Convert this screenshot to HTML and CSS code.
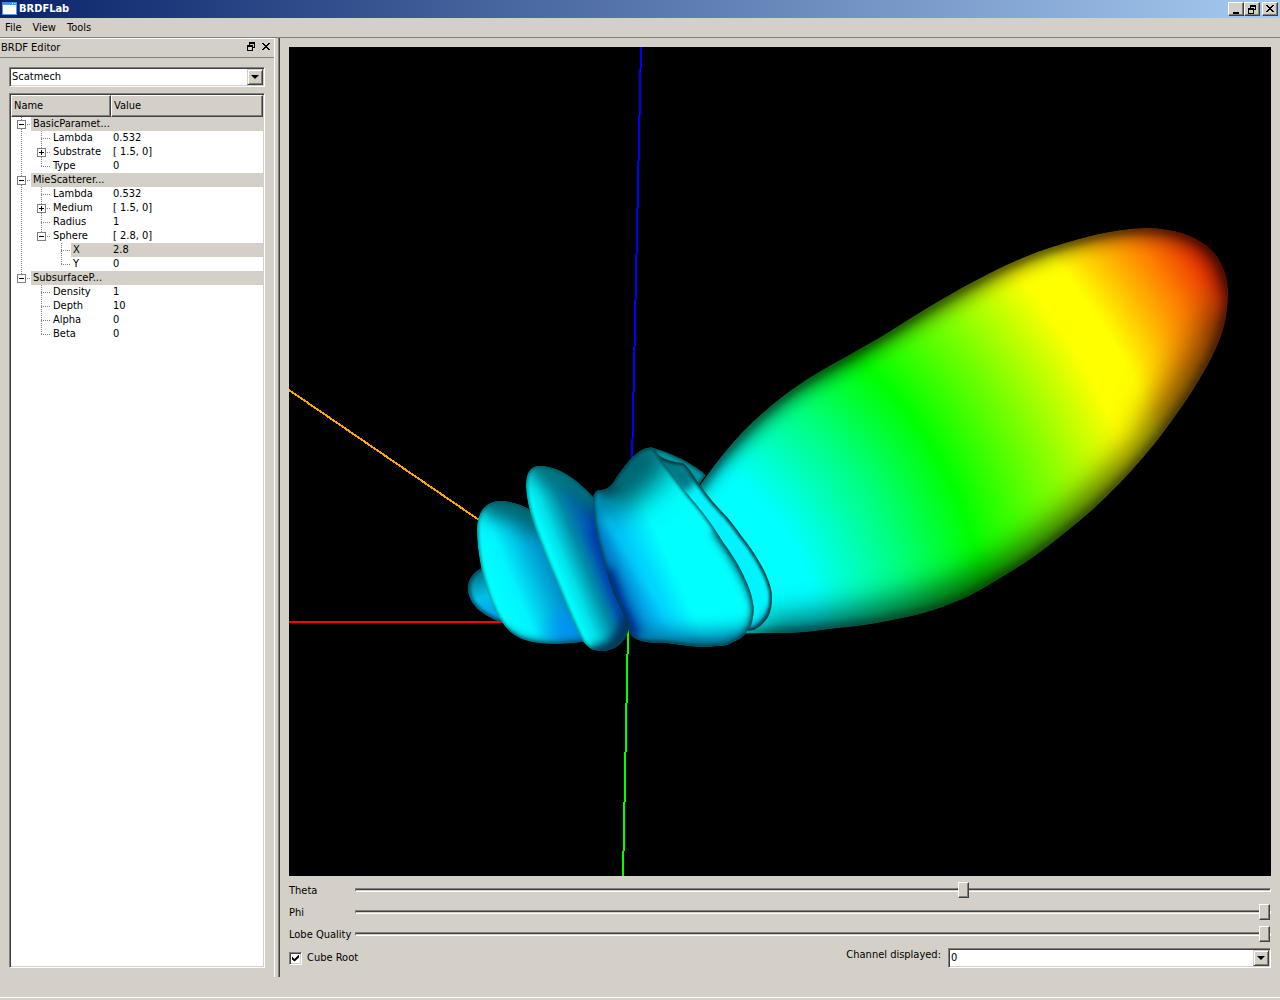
FILE: index.html
```html
<!DOCTYPE html>
<html lang="en">
<head>
<meta charset="utf-8">
<title>BRDFLab</title>
<link rel="stylesheet" href="styles.css">
</head>
<body>
<div class="window">
  <header class="titlebar">
    <svg class="app-icon" width="16" height="14" viewBox="0 0 16 14" aria-hidden="true">
      <rect x="0" y="0" width="15" height="13" fill="#5a9be0"/><rect x="0" y="0" width="15" height="2" fill="#3c8ce8"/><rect x="10" y="1" width="1" height="1" fill="#fff"/><rect x="12" y="1" width="2" height="1" fill="#f0a080"/><rect x="1" y="3" width="13" height="9" fill="#fffffa"/>
    </svg>
    <h1 class="title">BRDFLab</h1>
    <button class="win-btn" aria-label="Minimize"><svg width="12" height="10" viewBox="0 0 12 10"><path d="M3 8h6v2H3z"/></svg></button>
    <button class="win-btn" aria-label="Restore"><svg width="12" height="10" viewBox="0 0 12 10"><path fill-rule="evenodd" d="M4 1h6v5H8v4H2V4h2zM5 3v1h3v1h1V3zM3 6v3h4V6z"/></svg></button>
    <button class="win-btn win-close" aria-label="Close"><svg width="12" height="10" viewBox="0 0 12 10"><path d="M2 1h2v1h1v1h2V2h1V1h2v1H9v1H8v1H7v1h1v1h1v1h1v1H8V7H7V6H5v1H4v1H2V7h1V6h1V5h1V4H4V3H3V2H2z"/></svg></button>
  </header>

  <nav class="menubar" aria-label="Main menu">
    <button>File</button><button>View</button><button>Tools</button>
  </nav>

  <main class="workspace">
    <aside class="dock">
      <div class="dock-title">
        <h2>BRDF Editor</h2>
        <button aria-label="Float"><svg width="9" height="9" viewBox="0 0 9 9"><path fill-rule="evenodd" d="M2 0h6v6H6v3H0V3h2zM3 2v1h3v2h1V2zM1 5v3h4V5z"/></svg></button>
        <button aria-label="Close panel"><svg width="9" height="9" viewBox="0 0 9 9"><path d="M0 1h2v1h1v1h2V2h1V1h2v1H7v1H6v1H5v1h1v1h1v1h1v1H6V7H5V6H3v1H2v1H0V7h1V6h1V5h1V4H2V3H1V2H0z"/></svg></button>
      </div>
      <div class="dock-body">
        <div class="combo">
          <select aria-label="BRDF model"><option>Scatmech</option></select>
          <span class="combo-arrow"></span>
        </div>
        <div class="tree">
          <table>
            <thead><tr><th class="col-name" scope="col">Name</th><th scope="col">Value</th></tr></thead>
            <tbody>
              <tr class="shaded"><td><div class="cell"><i class="br mid"><button class="exp" aria-label="Collapse"></button></i><span>BasicParamet...</span></div></td><td></td></tr>
              <tr><td><div class="cell"><i class="br line"></i><i class="br mid"></i><span>Lambda</span></div></td><td>0.532</td></tr>
              <tr><td><div class="cell"><i class="br line"></i><i class="br mid"><button class="exp plus" aria-label="Expand"></button></i><span>Substrate</span></div></td><td>[ 1.5, 0]</td></tr>
              <tr><td><div class="cell"><i class="br line"></i><i class="br end"></i><span>Type</span></div></td><td>0</td></tr>
              <tr class="shaded"><td><div class="cell"><i class="br mid"><button class="exp" aria-label="Collapse"></button></i><span>MieScatterer...</span></div></td><td></td></tr>
              <tr><td><div class="cell"><i class="br line"></i><i class="br mid"></i><span>Lambda</span></div></td><td>0.532</td></tr>
              <tr><td><div class="cell"><i class="br line"></i><i class="br mid"><button class="exp plus" aria-label="Expand"></button></i><span>Medium</span></div></td><td>[ 1.5, 0]</td></tr>
              <tr><td><div class="cell"><i class="br line"></i><i class="br mid"></i><span>Radius</span></div></td><td>1</td></tr>
              <tr><td><div class="cell"><i class="br line"></i><i class="br end"><button class="exp" aria-label="Collapse"></button></i><span>Sphere</span></div></td><td>[ 2.8, 0]</td></tr>
              <tr class="shaded"><td><div class="cell"><i class="br line"></i><i class="br"></i><i class="br mid"></i><span>X</span></div></td><td>2.8</td></tr>
              <tr><td><div class="cell"><i class="br line"></i><i class="br"></i><i class="br end"></i><span>Y</span></div></td><td>0</td></tr>
              <tr class="shaded"><td><div class="cell"><i class="br end"><button class="exp" aria-label="Collapse"></button></i><span>SubsurfaceP...</span></div></td><td></td></tr>
              <tr><td><div class="cell"><i class="br"></i><i class="br mid"></i><span>Density</span></div></td><td>1</td></tr>
              <tr><td><div class="cell"><i class="br"></i><i class="br mid"></i><span>Depth</span></div></td><td>10</td></tr>
              <tr><td><div class="cell"><i class="br"></i><i class="br mid"></i><span>Alpha</span></div></td><td>0</td></tr>
              <tr><td><div class="cell"><i class="br"></i><i class="br end"></i><span>Beta</span></div></td><td>0</td></tr>
            </tbody>
          </table>
        </div>
      </div>
    </aside>
    <div class="splitter"></div>

    <section class="view">
      <svg class="scene" viewBox="289 47 982 829" preserveAspectRatio="xMidYMid slice" role="img" aria-label="Scattering lobe">
        <defs>
          <radialGradient id="hue" gradientUnits="userSpaceOnUse" cx="628" cy="632" r="720">
            <stop offset="0" stop-color="#0af"/>
            <stop offset=".17" stop-color="#0ff"/>
            <stop offset=".26" stop-color="#0ff"/>
            <stop offset=".385" stop-color="#00ff80"/>
            <stop offset=".495" stop-color="#0f0"/>
            <stop offset=".62" stop-color="#80ff00"/>
            <stop offset=".735" stop-color="#ff0"/>
            <stop offset=".785" stop-color="#ff0"/>
            <stop offset=".89" stop-color="#ff8000"/>
            <stop offset=".95" stop-color="#e83000"/>
            <stop offset="1" stop-color="#a00000"/>
          </radialGradient>
          <linearGradient id="gC" gradientUnits="userSpaceOnUse" x1="488" y1="580" x2="556" y2="552">
            <stop offset="0" stop-color="#0ff"/><stop offset=".3" stop-color="#00f4ff"/><stop offset=".7" stop-color="#00a8d8"/><stop offset="1" stop-color="#0078b8"/>
          </linearGradient>
          <linearGradient id="gB" gradientUnits="userSpaceOnUse" x1="544" y1="566" x2="606" y2="541">
            <stop offset="0" stop-color="#00e8e8"/><stop offset=".15" stop-color="#0ff"/><stop offset=".32" stop-color="#00e0e8"/><stop offset=".58" stop-color="#008ba8"/><stop offset=".82" stop-color="#0058b8"/><stop offset="1" stop-color="#0030a0"/>
          </linearGradient>
          <linearGradient id="gD" gradientUnits="userSpaceOnUse" x1="476" y1="570" x2="492" y2="618">
            <stop offset="0" stop-color="#007080"/><stop offset=".55" stop-color="#00c0e8"/><stop offset="1" stop-color="#00a0f0"/>
          </linearGradient>
          <linearGradient id="gA" gradientUnits="userSpaceOnUse" x1="608" y1="573" x2="664" y2="548">
            <stop offset="0" stop-color="#0060b0"/><stop offset=".3" stop-color="#00a4e4"/><stop offset=".55" stop-color="#00d0ff"/><stop offset="1" stop-color="#0ff"/>
          </linearGradient>
          <filter id="b1" filterUnits="userSpaceOnUse" x="289" y="47" width="982" height="829"><feGaussianBlur stdDeviation="1.5"/></filter>
          <filter id="b4" filterUnits="userSpaceOnUse" x="289" y="47" width="982" height="829"><feGaussianBlur stdDeviation="4"/></filter>
          <filter id="b9" filterUnits="userSpaceOnUse" x="289" y="47" width="982" height="829"><feGaussianBlur stdDeviation="9"/></filter>
          <filter id="b14" filterUnits="userSpaceOnUse" x="289" y="47" width="982" height="829"><feGaussianBlur stdDeviation="15"/></filter>
          <path id="main" d="M690 500C710 470 735 436 765 411C780 398 792 389 803 382C830 364 870 345 903 323C935 303 965 285 1000 268C1027 255 1052 246 1079 239C1105 232 1126 228 1148 228C1160 228 1172 230 1182 233C1191 236 1199 240 1206 245C1214 251 1220 259 1223 268C1227 276 1228 284 1228 293C1228 307 1226 320 1222 333C1216 350 1209 363 1199 380C1189 397 1178 412 1165 430C1151 449 1136 466 1120 483C1104 499 1090 513 1072 527C1051 544 1033 559 1010 572C992 583 974 595 955 602C938 609 922 614 907 617C885 622 861 626 838 628C815 631 800 633 781 633L720 634Z"/>
          <path id="F" d="M650 447C660 450 667 452 673 455C685 460 697 467 706 475L698 486L680 490Z"/>
          <path id="E" d="M655 452C664 461 676 462 683 463C690 468 694 477 700 485C705 492 709 497 713 502C718 507 722 512 727 517C733 524 738 531 743 538C748 544 753 551 757 558C761 565 765 571 767 577C770 584 772 590 772 597C772 605 771 611 768 617C764 623 760 627 754 630L720 634Z"/>
          <path id="D" d="M484 567C474 570 467 580 468 590C469 603 480 615 503 623L510 600Z"/>
          <path id="C" d="M477 530C477 512 485 501 502 501C515 502 524 506 532 511L600 640C570 643 555 645 540 643C520 641 510 634 502 622C488 603 477 560 477 530Z"/>
          <path id="B" d="M526 487C526 474 529 466 540 466C563 467 580 483 595 499L640 600L628 632C624 643 615 651 601 651C592 651 587 647 583 641C572 623 562 594 550 567C540 543 527 511 526 487Z"/>
          <path id="A" d="M593 503C593 494 595 490 600 490C605 490 609 488 613 483C619 474 627 462 634 456C641 449 648 447 653 448C656 450 658 454 660 458C664 464 669 469 673 475C679 483 684 490 690 497C696 504 702 511 707 518C713 526 718 534 723 542C728 549 733 556 737 563C741 570 744 576 747 583C750 590 752 596 753 603C754 608 754 612 753 617C752 623 751 627 748 630C744 636 740 639 733 642C728 645 723 646 717 646C708 647 699 647 690 646C682 645 675 644 667 643C660 642 654 643 647 642C641 641 637 640 633 637C629 633 628 628 628 623C621 609 611 591 607 573C601 553 594 532 593 503Z"/>
          <clipPath id="cMain"><use href="#main"/></clipPath>
          <clipPath id="cF"><use href="#F"/></clipPath>
          <clipPath id="cE"><use href="#E"/></clipPath>
          <clipPath id="cD"><use href="#D"/></clipPath>
          <clipPath id="cC"><use href="#C"/></clipPath>
          <clipPath id="cB"><use href="#B"/></clipPath>
          <clipPath id="cA"><use href="#A"/></clipPath>
        </defs>
        <rect x="289" y="47" width="982" height="829" fill="#000"/>
        <g fill="none" stroke-width="2" shape-rendering="crispEdges">
          <path d="M641 47L632 462" stroke="#00f"/>
          <path d="M628 630L623 876" stroke="#0f0"/>
          <path d="M289 622H505" stroke="#f00"/>
          <path d="M289 390L482 522" stroke="#ffa500"/>
        </g>

        <g clip-path="url(#cMain)">
          <use href="#main" fill="url(#hue)"/>
          <path d="M1150 425C1175 390 1195 350 1205 310" fill="none" stroke="#e07000" stroke-opacity=".55" stroke-width="30" filter="url(#b14)"/>
          <path d="M1235 300C1232 350 1165 445 1120 488C1080 528 1050 552 1010 576C950 610 880 630 760 642" fill="none" stroke="#000" stroke-opacity=".6" stroke-width="42" filter="url(#b14)"/>
          <path d="M680 496C720 446 765 401 803 378C870 341 935 299 1000 264C1050 240 1100 224 1148 224C1200 226 1226 250 1232 293" fill="none" stroke="#000" stroke-opacity=".5" stroke-width="26" filter="url(#b9)"/>
          <use href="#main" fill="none" stroke="#000" stroke-opacity=".5" stroke-width="8" filter="url(#b4)"/>
        </g>

        <g clip-path="url(#cF)">
          <use href="#F" fill="#0098a0"/>
          <use href="#F" fill="none" stroke="#004048" stroke-width="3" filter="url(#b1)"/>
        </g>
        <g clip-path="url(#cE)">
          <use href="#E" fill="#00f4ff"/>
          <path d="M655 450L692 486" stroke="#007884" stroke-width="22" filter="url(#b4)"/>
          <path d="M772 610C768 624 756 632 740 634" fill="none" stroke="#006a90" stroke-width="10" filter="url(#b4)"/>
          <use href="#E" fill="none" stroke="#003438" stroke-width="5" filter="url(#b1)"/>
        </g>

        <g clip-path="url(#cD)">
          <use href="#D" fill="url(#gD)"/>
          <use href="#D" fill="none" stroke="#003c50" stroke-opacity=".7" stroke-width="6" filter="url(#b1)"/>
        </g>

        <g clip-path="url(#cC)">
          <use href="#C" fill="url(#gC)"/>
          <path d="M475 503C490 488 520 498 550 520" fill="none" stroke="#006870" stroke-width="42" filter="url(#b9)"/>
          <path d="M552 622L600 645" stroke="#0090f8" stroke-opacity=".8" stroke-width="36" filter="url(#b9)"/>
          <path d="M504 630C520 648 560 648 590 642" fill="none" stroke="#004c68" stroke-width="7" filter="url(#b4)"/>
          <use href="#C" fill="none" stroke="#004850" stroke-opacity=".7" stroke-width="3" filter="url(#b1)"/>
        </g>

        <g clip-path="url(#cB)">
          <use href="#B" fill="url(#gB)"/>
          <path d="M527 468C540 453 575 470 604 504" fill="none" stroke="#00747a" stroke-width="36" filter="url(#b9)"/>
          <path d="M592 530L612 590L628 632" fill="none" stroke="#0030a0" stroke-opacity=".7" stroke-width="8" filter="url(#b4)"/>
          <path d="M590 652C607 658 624 645 634 612" fill="none" stroke="#003458" stroke-width="18" filter="url(#b4)"/>
          <use href="#B" fill="none" stroke="#004850" stroke-opacity=".7" stroke-width="3" filter="url(#b1)"/>
        </g>

        <g clip-path="url(#cA)">
          <use href="#A" fill="url(#gA)"/>
          <path d="M598 484C622 486 635 458 660 440" fill="none" stroke="#00606c" stroke-width="58" filter="url(#b14)"/>
          <path d="M612 486C625 480 635 458 658 446" fill="none" stroke="#006a76" stroke-opacity=".6" stroke-width="22" filter="url(#b9)"/>
          <path d="M630 646C660 636 700 652 752 638" fill="none" stroke="#0080b0" stroke-width="24" filter="url(#b9)"/>
          <path d="M604 516C618 534 634 564 658 600" fill="none" stroke="#00dcff" stroke-opacity=".6" stroke-width="6" filter="url(#b4)"/>
          <path d="M606 570L618 605L634 638" fill="none" stroke="#002c90" stroke-width="14" filter="url(#b4)"/>
          <path d="M600 488C604 496 610 494 618 484" fill="none" stroke="#003c50" stroke-width="6" filter="url(#b4)"/>
          <path d="M640 646H715C740 646 756 630 756 605C748 580 735 558 715 530" fill="none" stroke="#005060" stroke-width="7" filter="url(#b4)"/>
          <use href="#A" fill="none" stroke="#003c40" stroke-opacity=".8" stroke-width="4" filter="url(#b1)"/>
        </g>
      </svg>

      <form class="controls">
        <div class="slider-row"><label for="theta">Theta</label><input id="theta" type="range" min="0" max="90" value="60"></div>
        <div class="slider-row"><label for="phi">Phi</label><input id="phi" type="range" min="0" max="360" value="360"></div>
        <div class="slider-row"><label for="quality">Lobe Quality</label><input id="quality" type="range" min="0" max="100" value="100"></div>
        <div class="options">
          <label class="check"><input type="checkbox" checked>Cube Root</label>
          <label class="channel-label" for="channel">Channel displayed:</label>
          <div class="combo channel">
            <select id="channel"><option>0</option></select>
            <span class="combo-arrow"></span>
          </div>
        </div>
      </form>
    </section>
  </main>
  <footer class="statusbar"></footer>
</div>
</body>
</html>
```
FILE: styles.css
```css
:root {
  --face: #d4d0c8;
  --shadow: #808080;
  --dark: #404040;
}

* { box-sizing: border-box; }

body {
  margin: 0;
  background: var(--face);
  color: #000;
  font: 11px/14px Tahoma, "DejaVu Sans Condensed", "DejaVu Sans", sans-serif;
}

button, select, input { font: inherit; color: inherit; margin: 0; }
button { padding: 0; border: 0; background: none; }
svg { display: block; }

.window { display: flex; flex-direction: column; min-height: 100vh; }

/* Title bar */
.titlebar {
  display: flex;
  align-items: center;
  height: 18px;
  padding: 0 2px;
  background: linear-gradient(90deg, #0a246a, #a6caf0);
}
.title {
  flex: 1;
  margin: 0 0 0 1px;
  color: #fff;
  font-size: 11px;
  font-weight: bold;
}
.win-btn {
  width: 16px;
  height: 14px;
  padding: 1px;
  background: var(--face);
  border: 1px solid;
  border-color: #fff var(--dark) var(--dark) #fff;
  box-shadow: inset -1px -1px var(--shadow);
}
.win-close { margin-left: 2px; }

/* Menu */
.menubar {
  display: flex;
  gap: 11px;
  height: 20px;
  padding: 1px 5px 0;
  border-bottom: 1px solid var(--shadow);
}

.workspace { display: flex; flex: 1; }

/* Docked editor */
.dock {
  display: flex;
  flex-direction: column;
  width: 275px;
  border-top: 1px solid #fff;
  border-right: 1px solid #fff;
}
.dock-title {
  display: flex;
  align-items: center;
  gap: 6px;
  height: 19px;
  padding: 0 3px 0 1px;
  border-bottom: 1px solid var(--shadow);
}
.dock-title h2 { flex: 1; margin: 0; font-size: 11px; font-weight: normal; }
.dock-title button { margin-bottom: 3px; }
.dock-body {
  display: flex;
  flex: 1;
  flex-direction: column;
  gap: 6px;
  padding: 9px;
}

/* Drop-down boxes */
.combo {
  display: grid;
  align-items: center;
  height: 20px;
  background: #fff;
  border: 1px solid;
  border-color: var(--shadow) #fff #fff var(--shadow);
  box-shadow: inset 1px 1px var(--dark), inset -1px -1px var(--face);
}
.combo select {
  grid-area: 1 / 1;
  width: 100%;
  height: 16px;
  padding: 0 18px 0 2px;
  border: 0;
  background: none;
  appearance: none;
}
.combo-arrow {
  grid-area: 1 / 1;
  justify-self: end;
  display: grid;
  place-items: center;
  width: 16px;
  height: 16px;
  margin-right: 1px;
  background: var(--face);
  border: 1px solid;
  border-color: var(--face) var(--dark) var(--dark) var(--face);
  box-shadow: inset 1px 1px #fff, inset -1px -1px var(--shadow);
  pointer-events: none;
}
.combo-arrow::after {
  content: "";
  border: 4px solid transparent;
  border-top-color: #000;
  border-bottom: 0;
}

/* Parameter tree */
.tree {
  flex: 1;
  padding: 1px;
  background: #fff;
  border: 1px solid;
  border-color: var(--shadow) #fff #fff var(--shadow);
  box-shadow: inset 1px 1px var(--dark), inset -1px -1px var(--face);
}
table { width: 100%; border-collapse: separate; border-spacing: 0; table-layout: fixed; }
th {
  height: 22px;
  padding: 0 2px;
  background: var(--face);
  border: 1px solid;
  border-color: #fff var(--dark) var(--dark) #fff;
  box-shadow: inset -1px -1px var(--shadow);
  font-weight: normal;
  text-align: left;
}
.col-name { width: 100px; }
td { height: 14px; padding: 0; white-space: nowrap; }
td + td { padding-left: 2px; }
.cell { display: flex; }
.cell span { flex: 1; padding-left: 2px; }
.shaded span, .shaded td + td { background: var(--face); }

.br {
  flex: none;
  width: 20px;
  height: 14px;
  padding: 3px 0 0 6px;
  background-repeat: no-repeat;
}
.line, .mid, .end {
  --v: repeating-linear-gradient(var(--shadow) 0 1px, transparent 1px 2px);
  --h: repeating-linear-gradient(90deg, var(--shadow) 0 1px, transparent 1px 2px);
}
.line { background-image: var(--v); background-position: 10px 0; background-size: 1px 14px; }
.mid { background-image: var(--v), var(--h); background-position: 10px 0, 10px 7px; background-size: 1px 14px, 9px 1px; }
.end { background-image: var(--v), var(--h); background-position: 10px 0, 10px 7px; background-size: 1px 8px, 9px 1px; }
.exp {
  display: block;
  width: 9px;
  height: 9px;
  border: 1px solid var(--shadow);
  background: linear-gradient(#000, #000) center / 5px 1px no-repeat, #fff;
}
.plus {
  background: linear-gradient(#000, #000) center / 5px 1px no-repeat, linear-gradient(#000, #000) center / 1px 5px no-repeat, #fff;
}

.splitter {
  width: 2px;
  margin-left: 3px;
  background: linear-gradient(90deg, var(--shadow) 50%, var(--dark) 50%);
}

/* 3D view and its controls */
.view {
  display: flex;
  flex: 1;
  flex-direction: column;
  min-width: 0;
  padding: 9px;
}
.scene { flex: 1 1 0; width: 100%; min-height: 0; }
.controls { padding-top: 3px; }
.slider-row { display: flex; align-items: center; height: 22px; }
.slider-row label { width: 66px; padding-top: 1px; white-space: nowrap; }

input[type="range"] {
  flex: 1;
  min-width: 0;
  height: 16px;
  appearance: none;
  background: none;
}
input[type="range"]::-webkit-slider-runnable-track {
  height: 4px;
  background: var(--dark);
  border: 1px solid;
  border-color: var(--shadow) #fff #fff var(--shadow);
  box-shadow: inset 0 -1px var(--face);
}
input[type="range"]::-webkit-slider-thumb {
  appearance: none;
  width: 11px;
  height: 16px;
  margin-top: -7px;
  background: var(--face);
  border: 1px solid;
  border-color: #fff var(--dark) var(--dark) #fff;
  box-shadow: inset -1px -1px var(--shadow);
}

.options { display: flex; align-items: flex-start; margin-top: 3px; }
.check { display: flex; align-items: center; gap: 5px; height: 20px; margin-right: auto; }
input[type="checkbox"] {
  display: grid;
  flex: none;
  place-items: center;
  width: 13px;
  height: 13px;
  appearance: none;
  background: #fff;
  border: 1px solid;
  border-color: var(--shadow) #fff #fff var(--shadow);
  box-shadow: inset 1px 1px var(--dark), inset -1px -1px var(--face);
}
input[type="checkbox"]:checked::after {
  content: "";
  width: 7px;
  height: 7px;
  background: #000;
  clip-path: polygon(0 28%, 36% 64%, 100% 0, 100% 43%, 36% 100%, 0 71%);
}
.channel-label { margin-right: 7px; }
.channel { width: 323px; }

.statusbar { height: 23px; padding-top: 20px; }
.statusbar::after { content: ""; display: block; height: 1px; background: #fff; }
```
